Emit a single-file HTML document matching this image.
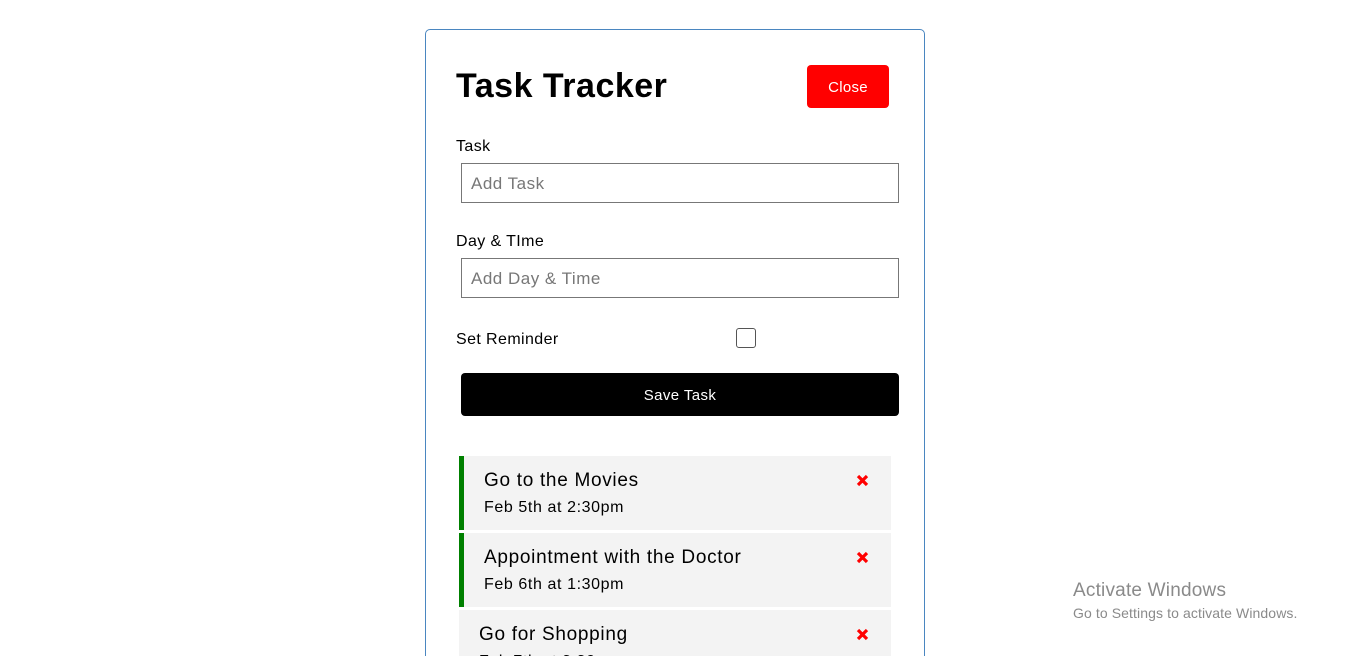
<!DOCTYPE html>
<html><head><meta charset="utf-8"><style>
*{box-sizing:border-box;margin:0;padding:0}
html,body{width:1348px;height:656px;overflow:hidden}
body{background:#fff;font-family:"Liberation Sans",sans-serif;position:relative;color:#000}
.card{position:absolute;left:425px;top:29px;width:500px;height:640px;border:1px solid #4a86c0;border-radius:5px}
.a{position:absolute}
h1{position:absolute;left:456px;top:67px;font-size:34px;font-weight:bold;letter-spacing:0.5px}
.close{left:807px;top:65px;width:82px;height:43px;background:#f00;color:#fff;border-radius:4px;font-size:15px;text-align:center;line-height:45px;letter-spacing:0.3px}
.lbl{font-size:16px;left:456px;letter-spacing:0.4px}
.inp{left:461px;width:438px;height:40px;border:1px solid #777;font-size:17px;color:#777;padding-left:9px;line-height:40px;letter-spacing:0.5px}
.save{left:461px;top:373px;width:438px;height:43px;background:#000;color:#fff;border-radius:4px;text-align:center;line-height:45px;font-size:15px;letter-spacing:0.4px}
.item{left:459px;width:432px;height:74px;background:#f3f3f3}
.item.g{border-left:5px solid #008000}
.t{position:absolute;left:20px;top:14px;font-size:19px;letter-spacing:0.7px}
.d{position:absolute;left:20px;top:43px;font-size:16px;letter-spacing:0.6px}
.x{position:absolute;right:22px;top:18px}
.win{left:1073px;color:#8a8a8a}
</style></head><body>
<div class="card"></div>
<h1>Task Tracker</h1>
<div class="a close">Close</div>
<div class="a lbl" style="top:138px">Task</div>
<div class="a inp" style="top:163px">Add Task</div>
<div class="a lbl" style="top:233px">Day &amp; TIme</div>
<div class="a inp" style="top:258px">Add Day &amp; Time</div>
<div class="a lbl" style="top:331px">Set Reminder</div>
<div class="a" style="left:736px;top:328px;width:20px;height:20px;border:1px solid #555;border-radius:3px"></div>
<div class="a save">Save Task</div>
<div class="a item g" style="top:456px"><div class="t">Go to the Movies</div><div class="d">Feb 5th at 2:30pm</div><svg class="x" width="13" height="13" viewBox="0 0 13 13"><path d="M2 2L11 11M11 2L2 11" stroke="#f00" stroke-width="3.2"/></svg></div>
<div class="a item g" style="top:533px"><div class="t">Appointment with the Doctor</div><div class="d">Feb 6th at 1:30pm</div><svg class="x" width="13" height="13" viewBox="0 0 13 13"><path d="M2 2L11 11M11 2L2 11" stroke="#f00" stroke-width="3.2"/></svg></div>
<div class="a item" style="top:610px"><div class="t">Go for Shopping</div><div class="d">Feb 7th at 3:30pm</div><svg class="x" width="13" height="13" viewBox="0 0 13 13"><path d="M2 2L11 11M11 2L2 11" stroke="#f00" stroke-width="3.2"/></svg></div>
<div class="a win" style="top:580px;font-size:19px;letter-spacing:0.2px">Activate Windows</div>
<div class="a win" style="top:605px;font-size:14px;letter-spacing:0.1px">Go to Settings to activate Windows.</div>
</body></html>
